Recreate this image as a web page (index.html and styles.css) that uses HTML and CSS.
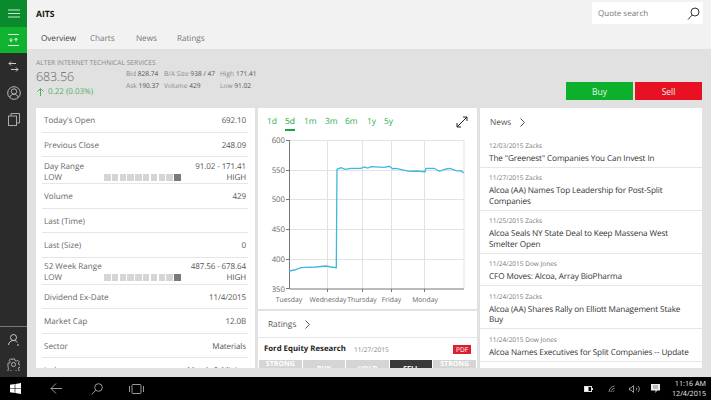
FILE: index.html
```html
<!DOCTYPE html>
<html lang="en">
<head>
<meta charset="utf-8">
<title>AITS</title>
<link rel="stylesheet" href="styles.css">
</head>
<body>
<div class="app">
  <nav class="rail">
    <div class="rail-btn rail-menu">
      <svg width="12" height="9" viewBox="0 0 12 9"><path d="M0 1h12M0 4.500h12M0 8h12" stroke="#c9ebd1" fill="none"/></svg>
    </div>
    <div class="rail-btn rail-active">
      <svg width="11" height="12" viewBox="0 0 11 12" fill="none" stroke="#d9f5de"><path d="M0 .5h11M0 11.500h11"/><path d="M3 4v3.500M1.500 5.500 3 7.500l1.500-2M8 7.500V4M6.500 6 8 4l1.500 2"/></svg>
    </div>
    <div class="rail-btn">
      <svg width="11" height="11" viewBox="0 0 11 11" fill="none" stroke="#ccc"><path d="M8 2.500H1M3 .5l-2 2 2 2M3 8.500h7M8 6.500l2 2-2 2"/></svg>
    </div>
    <div class="rail-btn">
      <svg width="14" height="14" viewBox="0 0 14 14" fill="none" stroke="#bbb"><circle cx="7" cy="7" r="6.300"/><circle cx="7" cy="5.500" r="2.700"/><path d="M2.800 11.500c.5-2.300 2.300-3.300 4.200-3.300s3.700 1 4.200 3.300"/></svg>
    </div>
    <div class="rail-btn">
      <svg width="12" height="13" viewBox="0 0 12 13" fill="none" stroke="#aaa"><rect x=".5" y="3" width="8" height="9.500"/><path d="M3 3V.5h8.500v9.500H8.500"/></svg>
    </div>
    <div class="rail-foot">
      <div class="rail-btn rail-foot-btn">
        <svg width="12" height="12" viewBox="0 0 12 12" fill="none" stroke="#ccc"><circle cx="5.500" cy="3.500" r="3"/><path d="M.5 11c.3-3 2.500-4.500 5-4.500 1.500 0 3 .6 4 1.800M9 11h2"/></svg>
      </div>
      <div class="rail-btn rail-foot-btn">
        <svg width="13" height="13" viewBox="0 0 14 14" fill="none" stroke="#bbb"><circle cx="7" cy="7" r="2.200"/><path d="M5.800 1h2.400l.4 1.800 1.300.6 1.600-1 1.700 1.700-1 1.600.5 1.300 1.800.4v2.400l-1.800.4-.5 1.300 1 1.600-1.700 1.700-1.600-1-1.300.5-.4 1.800H5.800l-.4-1.800-1.300-.5-1.600 1-1.700-1.700 1-1.600-.5-1.300L1 8.200V5.800l1.800-.4.500-1.300-1-1.600L4 .8l1.600 1z"/></svg>
      </div>
    </div>
  </nav>

  <main class="main">
    <header class="top">
      <div class="top-left">
        <div class="symbol">AITS</div>
        <div class="tabs">
          <span class="tab tab-on">Overview</span>
          <span class="tab">Charts</span>
          <span class="tab">News</span>
          <span class="tab">Ratings</span>
        </div>
      </div>
      <div class="search">
        <span>Quote search</span>
        <svg width="13" height="13" viewBox="0 0 13 13" fill="none" stroke="#333"><circle cx="8" cy="5" r="4"/><path d="M5.200 8 1 12.500"/></svg>
      </div>
    </header>

    <section class="quote">
      <div class="quote-name">
        <div class="company">ALTER INTERNET TECHNICAL SERVICES</div>
        <div class="quote-line">
          <div class="price-box">
            <div class="price">683.56</div>
            <div class="change"><svg width="7" height="8" viewBox="0 0 7 8" fill="none" stroke="#4caf63"><path d="M3.500 8V1M.5 3.500l3-3 3 3"/></svg>0.22 (0.03%)</div>
          </div>
          <div class="stats">
            <span class="stat">Bid <b>828.74</b></span>
            <span class="stat">B/A Size <b>938 / 47</b></span>
            <span class="stat">High <b>171.41</b></span>
            <span class="stat">Ask <b>190.37</b></span>
            <span class="stat">Volume <b>429</b></span>
            <span class="stat">Low <b>91.02</b></span>
          </div>
        </div>
      </div>
      <div class="actions">
        <button class="btn btn-buy">Buy</button>
        <button class="btn btn-sell">Sell</button>
      </div>
    </section>

    <section class="cards">
      <div class="card card-facts">
        <div class="row"><span>Today's Open</span><span class="val">692.10</span></div>
        <div class="row"><span>Previous Close</span><span class="val">248.09</span></div>
        <div class="row row-range">
          <div class="range-top"><span>Day Range</span><span class="val">91.02 - 171.41</span></div>
          <div class="range-bottom"><span>LOW</span><span class="meter"><i></i><i></i><i></i><i></i><i></i><i></i><i></i><i></i><i></i><i class="on"></i></span><span class="val">HIGH</span></div>
        </div>
        <div class="row"><span>Volume</span><span class="val">429</span></div>
        <div class="row"><span>Last (Time)</span></div>
        <div class="row"><span>Last (Size)</span><span class="val">0</span></div>
        <div class="row row-range">
          <div class="range-top"><span>52 Week Range</span><span class="val">487.56 - 678.64</span></div>
          <div class="range-bottom"><span>LOW</span><span class="meter"><i></i><i></i><i></i><i></i><i></i><i></i><i></i><i></i><i></i><i class="on"></i></span><span class="val">HIGH</span></div>
        </div>
        <div class="row"><span>Dividend Ex-Date</span><span class="val">11/4/2015</span></div>
        <div class="row"><span>Market Cap</span><span class="val">12.0B</span></div>
        <div class="row"><span>Sector</span><span class="val">Materials</span></div>
        <div class="row"><span>Industry</span><span class="val">Metals &amp; Mining</span></div>
      </div>

      <div class="mid">
        <div class="card card-chart">
          <div class="ranges">
            <span class="rng">1d</span><span class="rng"><span class="rng-on">5d</span></span><span class="rng">1m</span><span class="rng">3m</span><span class="rng">6m</span><span class="rng">1y</span><span class="rng">5y</span>
            <svg class="expand" width="12" height="12" viewBox="0 0 12 12" fill="none" stroke="#222"><path d="M1 11 11 1M7 1h4v4M1 7v4h4"/></svg>
          </div>
          <svg class="plot" width="219" height="179" viewBox="258 130 219 179">
            <g stroke="#e2e2e2" fill="none">
              <path d="M289 140.500H464M289 170.500H464M289 199.500H464M289 229.500H464M289 259.500H464"/>
              <path d="M327.500 140V289M362.500 140V289M391.500 140V289M424.500 140V289M464 140V289"/>
            </g>
            <path d="M289.500 140V289H464M286 140.500h3M286 170.500h3M286 199.500h3M286 229.500h3M286 259.500h3M286 288.500h3M327.500 289v3M362.500 289v3M391.500 289v3M424.500 289v3" stroke="#777" fill="none"/>
            <polyline fill="none" stroke="#3db8de" stroke-width="1.300" points="289.300,271 294.300,270 301,267.700 306,267.300 316,267 326,266 331,267 336.300,267.700 337,169.300 341,167.700 345.300,169.300 351,168.300 361,168.300 364.300,167 367.700,168 371,166.700 384.300,167.300 389.300,166.300 392.700,168.700 396,168.300 409.300,171.300 416,171 425,171.700 426,168.300 434.300,168.300 439.300,171.300 446,169 450,168.300 456,170.700 461,171 464,173"/>
            <g class="axis-y">
              <text x="285" y="143">600</text><text x="285" y="173">550</text><text x="285" y="202">500</text><text x="285" y="232">450</text><text x="285" y="262">400</text><text x="285" y="292">350</text>
            </g>
            <g class="axis-x">
              <text x="289" y="302">Tuesday</text><text x="328" y="302">Wednesday</text><text x="362" y="302">Thursday</text><text x="391.500" y="302">Friday</text><text x="425" y="302">Monday</text>
            </g>
          </svg>
        </div>
        <div class="card card-ratings">
          <div class="card-head">
            <span>Ratings</span>
            <svg width="5" height="9" viewBox="0 0 5 9" fill="none" stroke="#555"><path d="M.5.500l4 4-4 4"/></svg>
          </div>
          <div class="firm">
            <b>Ford Equity Research</b><span class="firm-date">11/27/2015</span><span class="pdf">PDF</span>
          </div>
          <div class="scale">
            <span class="up">STRONG</span><span>BUY</span><span>HOLD</span><span class="sel">SELL</span><span class="up">STRONG</span>
          </div>
        </div>
      </div>

      <div class="card card-news">
        <div class="card-head">
          <span>News</span>
          <svg width="5" height="9" viewBox="0 0 5 9" fill="none" stroke="#555"><path d="M.5.500l4 4-4 4"/></svg>
        </div>
        <article class="item"><div class="meta">12/03/2015 Zacks</div><div class="title">The "Greenest" Companies You Can Invest In</div></article>
        <article class="item"><div class="meta">11/27/2015 Zacks</div><div class="title">Alcoa (AA) Names Top Leadership for Post-Split<br>Companies</div></article>
        <article class="item"><div class="meta">11/25/2015 Zacks</div><div class="title">Alcoa Seals NY State Deal to Keep Massena West<br>Smelter Open</div></article>
        <article class="item"><div class="meta">11/24/2015 Dow Jones</div><div class="title">CFO Moves: Alcoa, Array BioPharma</div></article>
        <article class="item"><div class="meta">11/24/2015 Zacks</div><div class="title">Alcoa (AA) Shares Rally on Elliott Management Stake<br>Buy</div></article>
        <article class="item"><div class="meta">11/24/2015 Dow Jones</div><div class="title">Alcoa Names Executives for Split Companies -- Update</div></article>
        <article class="item"><div class="meta">11/24/2015 Dow Jones</div><div class="title">Alcoa Names Executives</div></article>
      </div>
    </section>
  </main>
</div>

<footer class="taskbar">
  <svg class="tb-win" width="11" height="11" viewBox="0 0 11 11" fill="#fff"><path d="M0 1.700 4.700 1v4.200H0zM5.300.9 11 0v5.200H5.300zM0 5.800h4.700V10L0 9.300zM5.300 5.800H11V11l-5.700-.9z"/></svg>
  <svg class="tb-back" width="12" height="11" viewBox="0 0 12 11" fill="none" stroke="#999"><path d="M12 5.500H1M6 .5l-5 5 5 5"/></svg>
  <svg class="tb-find" width="12" height="12" viewBox="0 0 12 12" fill="none" stroke="#999"><circle cx="7.500" cy="4.500" r="3.800"/><path d="M4.800 7.200.8 11.500"/></svg>
  <svg class="tb-view" width="15" height="10" viewBox="0 0 15 10" fill="none" stroke="#999"><rect x="3" y=".5" width="9" height="9" rx="1"/><path d="M.5 2v6M14.500 2v6"/></svg>
  <div class="tray">
    <svg class="t-batt" width="9" height="6" viewBox="0 0 9 6"><rect x=".5" y=".5" width="7" height="5" fill="none" stroke="#ddd"/><rect x="1" y="1" width="3.500" height="4" fill="#fff"/><rect x="8" y="2" width="1" height="2" fill="#ddd"/></svg>
    <svg class="t-wifi" width="7" height="7" viewBox="0 0 7 7" fill="none" stroke="#888"><path d="M1 7C1 4 3 1.500 6.500 1M3 7c0-2 1.500-3.500 3.500-3.500M5 7c0-.8.600-1.300 1.500-1.300"/></svg>
    <svg width="11" height="8" viewBox="0 0 11 8" fill="none" stroke="#999"><path d="M.5 3v2h1.500l2.500 2.500V.5L2 3zM7 2.500c.8.800.8 2.200 0 3M9 1c1.700 1.600 1.700 4.400 0 6"/></svg>
    <svg width="9" height="9" viewBox="0 0 9 9"><path d="M0 0h9v6.500H6L4.500 9V6.500H0z" fill="#eee"/><path d="M2 2h5M2 4h5" stroke="#888"/></svg>
    <div class="clock"><div>11:16 AM</div><div>12/4/2015</div></div>
  </div>
</footer>
</body>
</html>
```
FILE: styles.css
```css
* { box-sizing: border-box; }
html, body { margin: 0; height: 400px; overflow: hidden; }
body { width: 711px; font-family: "Open Sans", "Noto Sans", sans-serif; font-size: 8.600px; color: #666; background: #000; text-rendering: geometricPrecision; }

.app { display: flex; height: 377px; }

.rail { width: 27px; flex: none; background: #2b2b2b; display: flex; flex-direction: column; }
.rail-btn { height: 26.600px; display: flex; align-items: center; justify-content: center; }
.rail-menu { background: #0a8a2c; }
.rail-active { background: #10b32f; }
.rail-foot { margin-top: auto; border-top: 1px solid #777; }
.rail-foot-btn { height: 25px; }

.main { flex: 1; min-width: 0; background: #e1e1e1; display: flex; flex-direction: column; }

.top { height: 49px; background: #f2f2f2; display: flex; justify-content: space-between; padding: 2px 8px 0 9px; }
.symbol { font-size: 8.600px; font-weight: 700; color: #111; line-height: 24px; }
.tabs { display: grid; grid-template-columns: 49px 46px 41px auto; padding-left: 5px; line-height: 16px; margin-top: 5px; font-size: 8.200px; letter-spacing: -.05px; }
.tab { color: #777; }
.tab-on { color: #444; }
.search { width: 111px; height: 22px; background: #fff; display: flex; justify-content: space-between; align-items: center; padding: 0 3px 0 6px; color: #777; font-size: 8px; }

.quote { height: 59px; display: flex; justify-content: space-between; padding: 8px 9px 0 9px; }
.company { font-size: 6.700px; color: #888; line-height: 11px; }
.quote-line { display: flex; }
.price-box { width: 90px; }
.price { font-size: 12.500px; font-weight: 300; line-height: 18px; color: #666; letter-spacing: -.1px; }
.change { display: flex; align-items: center; gap: 4px; color: #4caf63; padding-left: 1px; line-height: 12px; font-size: 8px; }
.stats { display: grid; grid-template-columns: 38px 56px auto; grid-auto-rows: 12px; font-size: 6.600px; color: #888; line-height: 12px; white-space: nowrap; }
.stat b { font-weight: 400; color: #555; }
.actions { display: flex; gap: 2px; padding-top: 25px; }
.btn { width: 67px; height: 18px; border: 0; color: #e8f5e8; font: 8.500px "Open Sans", sans-serif; padding: 0; }
.btn-buy { background: #0cb02d; }
.btn-sell { background: #e81123; }

.cards { height: 260px; display: grid; grid-template-columns: 219px 219px 222px; gap: 3px; padding: 0 9px; overflow: hidden; }
.card { background: #fff; overflow: hidden; }

.card-facts { padding: 0 7px 0 6px; font-size: 8.100px; }
.row { height: 24.500px; border-bottom: 1px solid #e6e6e6; display: flex; justify-content: space-between; align-items: center; padding: 2px 2px 0; }
.row-range { height: 27px; display: block; line-height: 11px; padding-top: 3.500px; }
.range-top, .range-bottom { display: flex; justify-content: space-between; align-items: center; }
.val { color: #555; font-size: 8px; letter-spacing: -.1px; }
.meter { display: flex; gap: 1.300px; margin-left: 42px; margin-right: auto; }
.meter i { width: 6.500px; height: 7px; background: #d5d5d5; }
.meter i.on { background: #7a7a7a; }

.mid { display: flex; flex-direction: column; gap: 2px; min-height: 0; }
.card-chart { height: 201px; flex: none; }
.ranges { height: 22px; display: grid; grid-template-columns: 18px 19px 21px 20px 22px 17px 1fr auto; padding: 7px 9px 0 9px; color: #2fb457; line-height: 14px; font-size: 8.500px; }
.rng-on { display: inline-block; height: 15.500px; color: #18a53c; border-bottom: 2px solid #18a53c; }
.expand { margin-top: 1px; }
.plot { display: block; }
.axis-y text { font-size: 7.800px; fill: #666; text-anchor: end; font-family: "Open Sans", sans-serif; }
.axis-x text { font-size: 6.800px; fill: #666; text-anchor: middle; font-family: "Open Sans", sans-serif; }

.card-ratings { flex: 1; min-height: 0; }
.card-head { display: flex; align-items: center; gap: 9px; color: #555; border-bottom: 1px solid #e6e6e6; height: 27px; padding: 1px 0 0 10px; font-size: 8.300px; }
.firm { display: flex; align-items: center; height: 22px; padding: 0 6px; color: #222; }
.firm b { font-size: 7.800px; }
.firm-date { margin-left: 8px; color: #888; font-size: 6.600px; }
.pdf { margin-left: auto; background: #d9202f; color: #fff; font-size: 6.500px; line-height: 9px; padding: 0 3px; }
.scale { display: grid; grid-template-columns: repeat(5, 1fr); gap: 1px; padding: 0 1px; height: 30px; }
.scale span { background: #d5d5d5; color: #fff; text-align: center; font-size: 7px; font-weight: 700; padding-top: 5px; }
.scale span.up { padding-top: 0; }
.scale span.sel { background: #3a3a3a; }

.card-news .card-head { border-bottom: 0; }
.item { padding: 4.500px 9px 2.500px; border-bottom: 1px solid #e6e6e6; }
.meta { font-size: 6.500px; line-height: 12px; color: #777; }
.title { font-size: 8.200px; letter-spacing: -.12px; line-height: 10.500px; margin-top: 2px; color: #333; white-space: nowrap; }

.taskbar { height: 23px; background: #000; display: flex; align-items: center; padding-left: 10px; }
.tb-back { margin-left: 29px; }
.tb-find { margin-left: 29px; }
.tb-view { margin-left: 26px; }
.tray { margin-left: auto; margin-right: 5px; display: flex; align-items: center; gap: 11px; }
.t-batt { margin-right: 4px; }
.t-wifi { margin-right: 3px; }
.clock { color: #eee; font-size: 7.200px; line-height: 10px; text-align: right; white-space: nowrap; margin-left: 1px; }
```
